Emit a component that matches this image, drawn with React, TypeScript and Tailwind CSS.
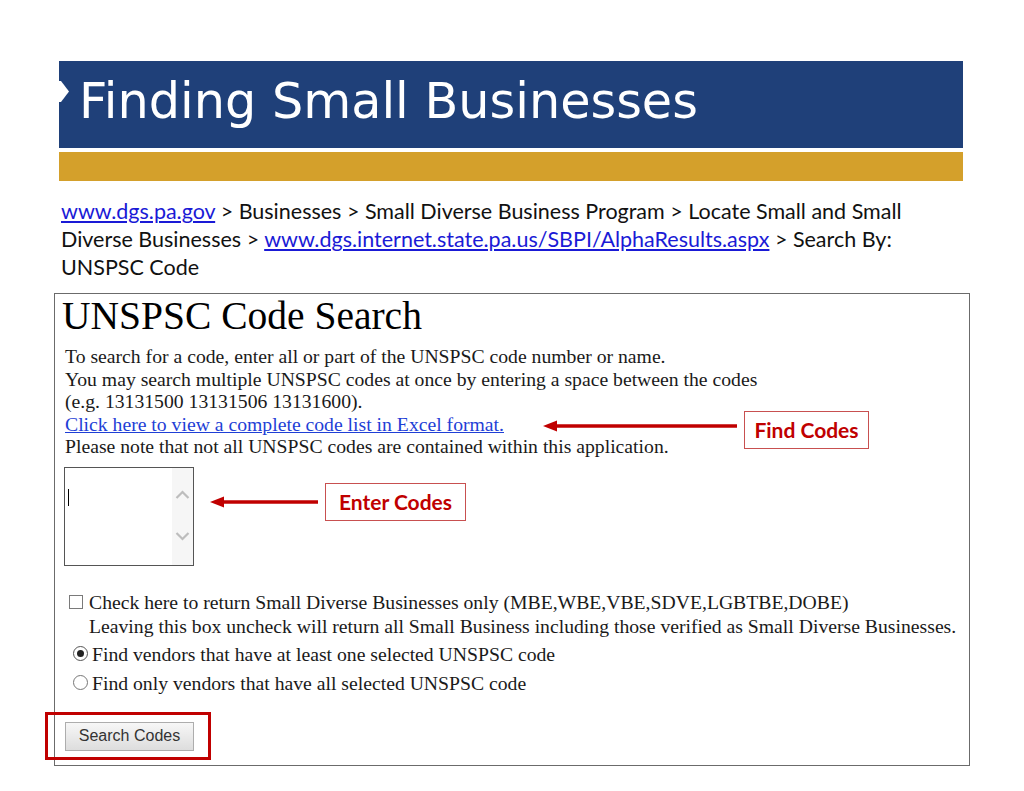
import React from "react";

function ArrowLeft({ width }: { width: number }) {
  return (
    <svg width={width} height={12} viewBox={`0 0 ${width} 12`}>
      <line x1={10} y1={6} x2={width} y2={6} stroke="#c00000" strokeWidth={3.5} />
      <polygon points="0,6 14,0.5 14,11.5" fill="#c00000" />
    </svg>
  );
}

export default function App() {
  return (
    <div className="relative w-[1024px] h-[791px] bg-white overflow-hidden">
      {/* Title banner */}
      <div className="pt-[61px]">
        <div className="relative ml-[59px] w-[904px] h-[87px] bg-[#1f4079] pt-[16px] pl-[20px]">
          <svg className="absolute left-0 top-[20px]" width={11} height={21} viewBox="0 0 11 21">
            <polygon points="0,0 2,0 10,10.5 2,21 0,21" fill="#ffffff" />
          </svg>
          <h1 className="text-white text-[49.3px] leading-none font-['DejaVu_Sans',sans-serif]">
            Finding Small Businesses
          </h1>
        </div>
        <div className="ml-[59px] mt-[4px] w-[904px] h-[29px] bg-[#d4a02b]" />
      </div>

      {/* Breadcrumb */}
      <div className="ml-[61px] mt-[16px] text-[21.5px] leading-[28px] text-[#111] font-['Lato',sans-serif] whitespace-nowrap">
        <div>
          <span className="text-[#1a1ad6] underline">www.dgs.pa.gov</span> &gt; Businesses &gt; Small Diverse Business Program &gt; Locate Small and Small
        </div>
        <div>
          Diverse Businesses &gt; <span className="text-[#1a1ad6] underline">www.dgs.internet.state.pa.us/SBPI/AlphaResults.aspx</span> &gt; Search By:
        </div>
        <div>UNSPSC Code</div>
      </div>

      {/* Screenshot panel */}
      <div className="relative ml-[54px] mt-[12px] w-[916px] h-[473px] border border-[#6b6b6b] font-['Liberation_Serif',serif] text-[#1a1a1a]">
        <div className="pl-[7px] mt-[2px] text-[39.5px] leading-[40px] text-black">UNSPSC Code Search</div>
        <div className="pl-[10px] mt-[9px] text-[19.7px] leading-[22.5px]">
          <div>To search for a code, enter all or part of the UNSPSC code number or name.</div>
          <div>You may search multiple UNSPSC codes at once by entering a space between the codes</div>
          <div>(e.g. 13131500 13131506 13131600).</div>
          <div>
            <span className="text-[#1f3fd6] underline">Click here to view a complete code list in Excel format.</span>
          </div>
          <div>Please note that not all UNSPSC codes are contained within this application.</div>
        </div>

        {/* Textarea */}
        <div className="ml-[9px] mt-[9px] w-[130px] h-[99px] border border-[#555] flex">
          <div className="flex-1 pt-[21px] pl-[3px]">
            <div className="w-[1px] h-[17px] bg-black" />
          </div>
          <div className="w-[21px] bg-[#f6f6f6] flex flex-col items-center pt-[22px]">
            <svg width={15} height={9} viewBox="0 0 15 9">
              <polyline points="1.5,8 7.5,2 13.5,8" fill="none" stroke="#bdbdbd" strokeWidth={2.2} />
            </svg>
            <svg className="mt-[33px]" width={15} height={9} viewBox="0 0 15 9">
              <polyline points="1.5,1 7.5,7 13.5,1" fill="none" stroke="#bdbdbd" strokeWidth={2.2} />
            </svg>
          </div>
        </div>

        {/* Options */}
        <div className="mt-[24px] text-[19.7px]">
          <div className="flex items-center leading-[24px] pl-[14px]">
            <span className="w-[14px] h-[14px] border border-[#7a7a7a] bg-white mr-[6px]" />
            <span>Check here to return Small Diverse Businesses only (MBE,WBE,VBE,SDVE,LGBTBE,DOBE)</span>
          </div>
          <div className="leading-[24px] pl-[34px]">
            Leaving this box uncheck will return all Small Business including those verified as Small Diverse Businesses.
          </div>
          <div className="flex items-center leading-[28px] pl-[18px] mt-[2px]">
            <span className="w-[15px] h-[15px] rounded-full border border-[#555] bg-white mr-[4px] flex items-center justify-center">
              <span className="w-[7px] h-[7px] rounded-full bg-[#222]" />
            </span>
            <span>Find vendors that have at least one selected UNSPSC code</span>
          </div>
          <div className="flex items-center leading-[28px] pl-[18px] mt-[1px]">
            <span className="w-[15px] h-[15px] rounded-full border border-[#777] bg-white mr-[4px]" />
            <span>Find only vendors that have all selected UNSPSC code</span>
          </div>
        </div>

        <div className="ml-[10px] mt-[25px]">
          <button className="w-[129px] h-[29px] border border-[#adadad] bg-gradient-to-b from-[#f7f7f7] to-[#dddddd] text-[#333] text-[16px] font-['Liberation_Sans',sans-serif] leading-none">
            Search Codes
          </button>
        </div>

        {/* Annotations */}
        <div className="absolute left-[488px] top-[126px]">
          <ArrowLeft width={194} />
        </div>
        <div className="absolute left-[689px] top-[117px] w-[125px] h-[38px] border border-[#c85050] bg-white flex items-center justify-center text-[#c00000] font-bold text-[21px] font-['Lato',sans-serif]">
          Find Codes
        </div>
        <div className="absolute left-[155px] top-[202px]">
          <ArrowLeft width={108} />
        </div>
        <div className="absolute left-[270px] top-[189px] w-[141px] h-[38px] border border-[#c85050] bg-white flex items-center justify-center text-[#c00000] font-bold text-[21px] font-['Lato',sans-serif]">
          Enter Codes
        </div>
        <div className="absolute left-[-10px] top-[418px] w-[166px] h-[48px] border-[3px] border-[#c00000]" />
      </div>
    </div>
  );
}
